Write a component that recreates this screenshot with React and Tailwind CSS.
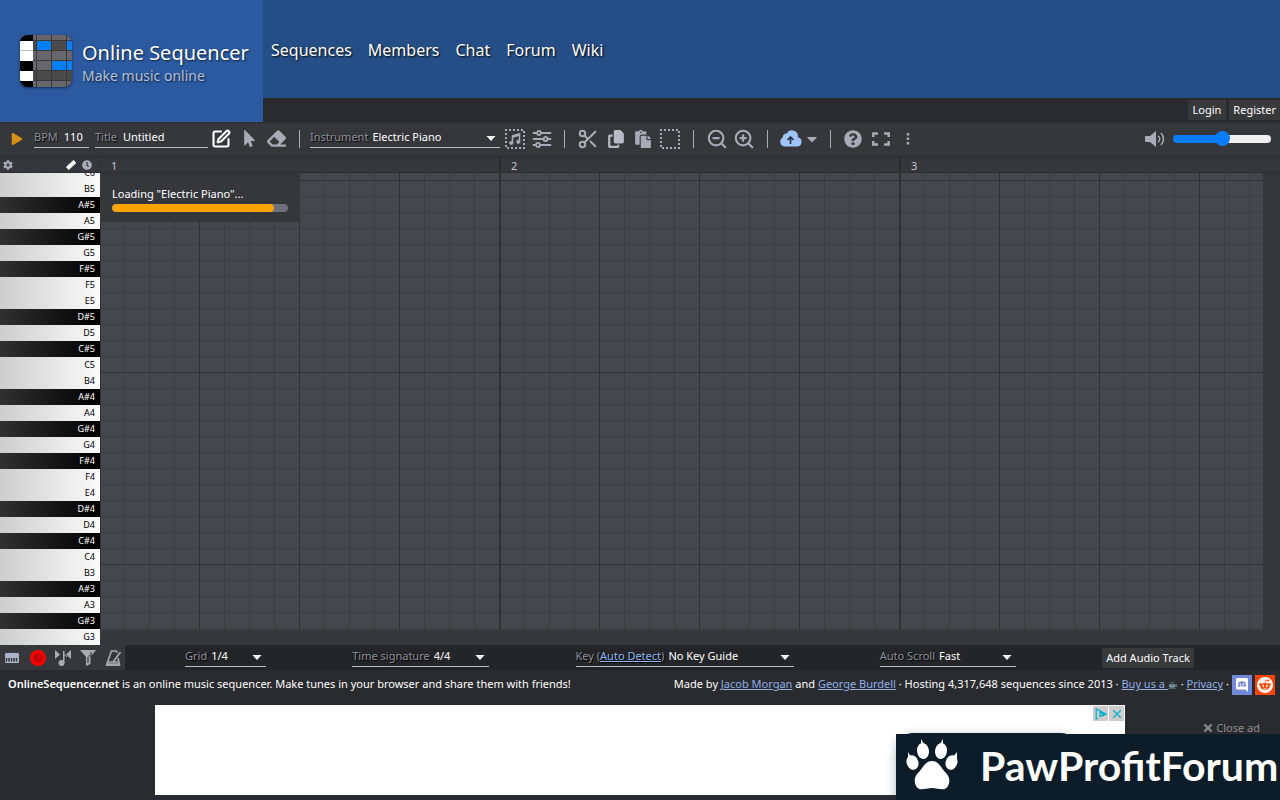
import React from "react";
import { FaPlay, FaMousePointer, FaEraser, FaCog, FaClock, FaQuestionCircle, FaCaretDown, FaPaste } from "react-icons/fa";
import { FaCopy, FaReddit } from "react-icons/fa6";
import { SquarePen, Scissors, ZoomIn, ZoomOut, X } from "lucide-react";

const NOTES = ["C", "B", "A#", "A", "G#", "G", "F#", "F", "E", "D#", "D", "C#"];
const KEYS = [];
for (let i = 0; i < 30; i++) {
  KEYS.push(NOTES[i % 12] + (i === 0 ? 6 : 5 - Math.floor((i - 1) / 12)));
}

const BAR_LABELS = ["1", "2", "3"];

function Logo() {
  return (
    <svg viewBox="0 0 52 52" className="size-[52px] shrink-0 rounded-lg shadow-sm shadow-black/40" aria-hidden="true">
      <rect width="52" height="52" fill="#38383a" />
      <rect width="13" height="52" fill="#000" />
      <rect y="6" width="13" height="20" fill="#fff" />
      <rect y="15" width="13" height="1" fill="#bbb" />
      <rect y="36" width="13" height="10" fill="#fff" />
      {[13, 17, 32, 47].map((x, i) => {
        const w = [3, 14, 14, 5][i];
        return (
          <g key={x}>
            <rect x={x} y="0" width={w} height="5" fill="#67676b" />
            <rect x={x} y="6" width={w} height="9" fill="#4a4a4b" />
            <rect x={x} y="16" width={w} height="9" fill="#67676b" />
            <rect x={x} y="26" width={w} height="9" fill="#67676b" />
            <rect x={x} y="36" width={w} height="9" fill="#4a4a4b" />
            <rect x={x} y="46" width={w} height="6" fill="#67676b" />
          </g>
        );
      })}
      <g fill="#0080ff">
        <rect x="17" y="6" width="14" height="9" rx="1.5" />
        <rect x="47" y="6" width="7" height="9" rx="1" />
        <rect x="32" y="26" width="14" height="9" rx="1" />
        <rect x="47" y="26" width="7" height="9" rx="1" />
      </g>
    </svg>
  );
}

function Separator() {
  return <div className="h-[18px] w-px shrink-0 bg-[#a9abb5]" />;
}

function ToolButton({ label, className = "", children }) {
  return (
    <button type="button" aria-label={label} className={"flex h-6 shrink-0 items-center justify-center text-[#a9abb9] " + className}>
      {children}
    </button>
  );
}

function Caret({ className = "" }) {
  return (
    <svg viewBox="0 0 10 5" className={"w-2.5 " + className} fill="currentColor" aria-hidden="true">
      <path d="M0.500 0h9L5 5z" />
    </svg>
  );
}

function SelectField({ id, label, value, className }) {
  return (
    <div className={"relative flex h-[18px] items-center gap-1 border-b border-[#b9bac6] pb-0.5 text-[11px] " + className}>
      <label htmlFor={id} className="shrink-0 text-[#8d909b] [text-shadow:1px_1px_1px_#000]">
        {label}
      </label>
      <select id={id} defaultValue={value} className="min-w-0 flex-1 appearance-none bg-transparent text-[11px] text-white outline-none">
        <option>{value}</option>
      </select>
      <Caret className="pointer-events-none absolute right-1 top-1.5 text-white" />
    </div>
  );
}

function DottedBox({ children }) {
  return (
    <svg viewBox="0 0 20 20" className="size-5" fill="none" stroke="currentColor">
      <rect x="1" y="1" width="18" height="18" strokeWidth="2" strokeDasharray="2 2" strokeDashoffset="1" />
      {children}
    </svg>
  );
}

function Grid() {
  return (
    <svg className="block h-full w-full" aria-label="Note grid">
      <defs>
        <pattern id="cell" width="25" height="16" y="8" patternUnits="userSpaceOnUse">
          <rect width="25" height="16" fill="#46474c" />
          <rect y="15" width="25" height="1" fill="#3c3d41" />
          <rect x="24" width="1" height="16" fill="#3c3d41" />
        </pattern>
        <pattern id="beat" width="100" height="16" patternUnits="userSpaceOnUse">
          <rect x="99" width="1" height="16" fill="#303135" />
        </pattern>
        <pattern id="bar" width="400" height="192" y="8" patternUnits="userSpaceOnUse">
          <rect x="399" width="2" height="192" fill="#303135" />
          <rect width="1" height="192" fill="#303135" />
          <rect y="191" width="400" height="1" fill="#303135" />
        </pattern>
      </defs>
      <rect width="100%" height="100%" fill="url(#cell)" />
      <rect width="100%" height="100%" fill="url(#beat)" />
      <rect width="100%" height="100%" fill="url(#bar)" />
    </svg>
  );
}

function Header() {
  const link = "text-white [text-shadow:1px_1px_2px_#000]";
  return (
    <header className="flex h-[122px] shrink-0">
      <a href="#home" className="flex w-[263px] shrink-0 items-center gap-2.5 bg-[#2b5aa0] pl-5">
        <Logo />
        <span className="flex flex-col whitespace-nowrap pt-1.5 [text-shadow:1px_1px_2px_#000a]">
          <span className="text-xl leading-6 text-white">Online Sequencer</span>
          <span className="text-sm leading-[22px] text-[#b3c0d6]">Make music online</span>
        </span>
      </a>
      <div className="flex flex-1 flex-col bg-[#2a2b2e]">
        <nav className="flex h-[98px] items-center gap-4 bg-[#254e87] px-2 pt-0.5 text-base">
          <a className={link} href="#sequences">Sequences</a>
          <a className={link} href="#members">Members</a>
          <a className={link} href="#chat">Chat</a>
          <a className={link} href="#forum">Forum</a>
          <a className={link} href="#wiki">Wiki</a>
        </nav>
        <div className="flex h-6 items-center justify-end gap-[3px] text-[11px] text-white">
          <button type="button" className="h-5 bg-[#38393b] px-[5px]">Login</button>
          <button type="button" className="h-5 bg-[#38393b] px-1">Register</button>
        </div>
      </div>
    </header>
  );
}

function Toolbar() {
  return (
    <div className="flex h-[34px] shrink-0 items-center border-t border-[#2d2e31] bg-[#36373a] pb-0.5 pl-[11px] pr-[9px] text-[11px]">
      <ToolButton label="Play" className="w-3">
        <FaPlay className="size-3 text-[#d68f14]" />
      </ToolButton>
      <div className="ml-[11px] flex h-[18px] w-[55px] items-center gap-1.5 border-b border-[#b9bac6] pb-0.5">
        <label htmlFor="bpm" className="text-[#8d909b] [text-shadow:1px_1px_1px_#000]">BPM</label>
        <input id="bpm" defaultValue="110" className="w-0 min-w-0 flex-1 bg-transparent text-white outline-none" />
      </div>
      <div className="ml-1.5 flex h-[18px] w-[113px] items-center gap-1.5 border-b border-[#b9bac6] pb-0.5">
        <label htmlFor="title" className="text-[#8d909b] [text-shadow:1px_1px_1px_#000]">Title</label>
        <input id="title" defaultValue="Untitled" className="w-0 min-w-0 flex-1 bg-transparent text-white outline-none" />
      </div>
      <ToolButton label="Edit" className="ml-[3px] w-5">
        <SquarePen className="size-5 text-white" strokeWidth={2.5} />
      </ToolButton>
      <ToolButton label="Select" className="ml-2 w-5">
        <FaMousePointer className="size-[17px]" />
      </ToolButton>
      <ToolButton label="Erase" className="ml-[7px] mr-[13px] w-5">
        <FaEraser className="size-[19px]" />
      </ToolButton>
      <Separator />
      <SelectField id="instrument" label="Instrument" value="Electric Piano" className="ml-2.5 w-[190px]" />
      <ToolButton label="Select by instrument" className="ml-[5px] w-5">
        <DottedBox>
          <path d="M7.5 13.5V7l7-2v7.5" strokeWidth="1.5" />
          <path d="M7.5 7.5l7-2" strokeWidth="2.5" />
          <circle cx="6.3" cy="14" r="1.6" fill="currentColor" />
          <circle cx="13.3" cy="12.8" r="1.6" fill="currentColor" />
        </DottedBox>
      </ToolButton>
      <ToolButton label="Instrument settings" className="ml-[7px] mr-3 w-5">
        <svg viewBox="0 0 20 20" className="size-5" fill="none" stroke="currentColor" strokeWidth="1.8" strokeLinecap="round">
          <path d="M1.5 4H5m4 0h9.500M1.500 10H11.500m4 0h3M1.500 16H4m4 0h10.500" />
          <circle cx="7" cy="4" r="2" />
          <circle cx="13.500" cy="10" r="2" />
          <circle cx="6" cy="16" r="2" />
        </svg>
      </ToolButton>
      <Separator />
      <ToolButton label="Cut" className="ml-[13px] w-5"><Scissors className="size-[22px] shrink-0" strokeWidth={2.2} /></ToolButton>
      <ToolButton label="Copy" className="ml-2 w-5"><FaCopy className="size-[18px] text-[#b9bac6]" /></ToolButton>
      <ToolButton label="Paste" className="ml-[7px] w-5"><FaPaste className="size-[18px]" /></ToolButton>
      <ToolButton label="Select area" className="ml-[7px] mr-[13px] w-5"><DottedBox /></ToolButton>
      <Separator />
      <ToolButton label="Zoom out" className="ml-[13px] w-5"><ZoomOut className="size-[22px] shrink-0" strokeWidth={2.3} /></ToolButton>
      <ToolButton label="Zoom in" className="ml-[7px] mr-[13px] w-5"><ZoomIn className="size-[22px] shrink-0" strokeWidth={2.3} /></ToolButton>
      <Separator />
      <ToolButton label="Save" className="ml-[11px] w-[23px]">
        <svg viewBox="0 0 23 17" className="w-[23px]">
          <path d="M18.800 7.200A5.800 5.800 0 0 0 7.900 3.600 4 4 0 0 0 3.700 7.400 4.900 4.900 0 0 0 5.300 16.500H18a4.700 4.700 0 0 0 .8-9.300z" fill="#a0c5fa" />
          <path d="M11.500 14V7.500M8.500 10l3-3 3 3" fill="none" stroke="#2b3240" strokeWidth="1.700" />
        </svg>
      </ToolButton>
      <ToolButton label="Save options" className="ml-1 mr-3 w-3"><FaCaretDown className="size-4 shrink-0" /></ToolButton>
      <Separator />
      <ToolButton label="Help" className="ml-3 w-5"><FaQuestionCircle className="size-[18px]" /></ToolButton>
      <ToolButton label="Fullscreen" className="ml-2 w-5">
        <svg viewBox="0 0 20 16" className="w-5" fill="none" stroke="currentColor" strokeWidth="2.500">
          <path d="M2.300 6V2.500H7M13 2.500h4.700V6M17.700 10v3.500H13M7 13.500H2.300V10" />
        </svg>
      </ToolButton>
      <ToolButton label="More" className="ml-[7px] w-5">
        <svg viewBox="0 0 4 12" className="h-3" fill="currentColor">
          <rect x=".7" y="0" width="2.500" height="2.500" /><rect x=".7" y="4.500" width="2.500" height="2.500" /><rect x=".7" y="9" width="2.500" height="2.500" />
        </svg>
      </ToolButton>
      <div className="ml-auto flex items-center gap-2">
        <ToolButton label="Mute" className="w-5">
          <svg viewBox="0 0 20 16" className="w-5" fill="none" stroke="currentColor" strokeWidth="1.500">
            <path d="M1 5h4l6-5v16L5 11H1a1 1 0 0 1-1-1V6a1 1 0 0 1 1-1z" fill="currentColor" stroke="none" />
            <path d="M13.500 5.200a4 4 0 0 1 0 5.600M16.300 2.500a8 8 0 0 1 0 11" strokeLinecap="round" />
          </svg>
        </ToolButton>
        <input
          type="range"
          aria-label="Volume"
          defaultValue="50"
          className="h-2 w-[98px] appearance-none rounded-full bg-[linear-gradient(90deg,#0a7cff_50%,#efefef_50%)] [&::-webkit-slider-thumb]:size-[15px] [&::-webkit-slider-thumb]:appearance-none [&::-webkit-slider-thumb]:rounded-full [&::-webkit-slider-thumb]:bg-[#0a7cff]"
        />
      </div>
    </div>
  );
}

function Ruler() {
  return (
    <div className="flex h-[17px] shrink-0 border-y border-[#2d2e31] bg-[#36373a] text-[#a9abb9]">
      <div className="flex w-[101px] shrink-0 items-center border-r border-[#2d2e31] pl-[3px] pr-2">
        <button type="button" aria-label="Settings"><FaCog className="size-2.5" /></button>
        <button type="button" aria-label="Ruler" className="ml-auto mr-[5px]">
          <svg viewBox="0 0 12 12" className="size-3"><path d="M8.500 1.500 1.500 8l2.200 2.500 7-6.500z" fill="#fff" stroke="#fff" strokeLinejoin="round" /></svg>
        </button>
        <button type="button" aria-label="Time"><FaClock className="size-2.5" /></button>
      </div>
      <div className="flex flex-1 overflow-hidden text-[11px] leading-[17px] text-[#c5c6cc]">
        {BAR_LABELS.map((n) => (
          <div key={n} className="w-[400px] shrink-0 border-r-2 border-[#2a2b2e] pl-2.5">{n}</div>
        ))}
      </div>
    </div>
  );
}

function Piano() {
  return (
    <div className="w-[100px] shrink-0 overflow-hidden">
      <div className="-mt-2 text-[9px] leading-4">
        {KEYS.map((k) => (
          <div
            key={k}
            className={
              k.includes("#")
                ? "h-4 bg-[linear-gradient(90deg,#303030,#000)] pr-[5px] text-right text-white"
                : "h-4 bg-[linear-gradient(90deg,#cecece,#fafafa)] pr-[5px] text-right text-black"
            }
          >
            {k}
          </div>
        ))}
      </div>
    </div>
  );
}

function Editor() {
  return (
    <main className="flex min-h-0 flex-1 bg-[#36373a]">
      <Piano />
      <div className="relative flex-1 pb-[15px] pr-[17px]">
        <Grid />
        <div className="absolute left-0 top-0 w-[200px] bg-[#36373a] px-3 pb-2.5 pt-[13px] text-[11px] leading-4 text-white">
          <div>Loading "Electric Piano"...</div>
          <div className="mt-0.5 h-2 overflow-hidden rounded-sm bg-[#6c707c]">
            <div className="h-full w-[92%] rounded-sm bg-[#ffa500]" />
          </div>
        </div>
      </div>
    </main>
  );
}

function BottomBar() {
  return (
    <div className="flex h-[25px] shrink-0 bg-[#242528] text-[11px]">
      <div className="flex w-[125px] shrink-0 items-center gap-[5px] bg-[#36373a] pl-1 text-[#a9abb0]">
        <button type="button" aria-label="Keyboard" className="flex w-4 justify-center">
          <svg viewBox="0 0 14 10" className="w-3.5"><rect width="14" height="10" rx="1" fill="#a9b4c8" /><path d="M1.500 8.500V5M4 8.500V5M6.500 8.500V5M9 8.500V5M11.500 8.500V5" stroke="#303135" strokeWidth="1.500" /></svg>
        </button>
        <button type="button" aria-label="Record" className="ml-1 flex w-[18px] justify-center">
          <svg viewBox="0 0 16 16" className="size-4"><circle cx="8" cy="8" r="8" fill="#f00" /><circle cx="8" cy="8" r="5" fill="#c80000" /></svg>
        </button>
        <button type="button" aria-label="Note preview" className="ml-0.5 flex w-[18px] justify-center">
          <svg viewBox="0 0 16 16" className="size-4 shrink-0" fill="currentColor"><path d="M0 0l5 4.500L0 9zM16 0l-5 4.500L16 9zM8 1h1.500v12H8z" /><path d="M9 4l3 3" stroke="currentColor" /><circle cx="6.500" cy="13" r="3" /></svg>
        </button>
        <button type="button" aria-label="Filter" className="ml-0.5 flex w-[18px] justify-center">
          <svg viewBox="0 0 16 16" className="size-4 shrink-0" fill="currentColor"><path d="M0 0h16l-5.500 7v7L6 16V7z" /><path d="M8 13V7M11 2v4H8.500" stroke="#36373a" fill="none" strokeWidth="1.200" /></svg>
        </button>
        <button type="button" aria-label="Metronome" className="ml-0.5 flex w-[18px] justify-center">
          <svg viewBox="0 0 16 16" className="size-4 shrink-0" fill="none" stroke="currentColor" strokeWidth="1.600"><path d="M12 3L11.500 1h-5L1.500 15h13L13 8M8 12l7.500-10M3 12h10" /><path d="M2 14.500h12.500" strokeWidth="2.500" /></svg>
        </button>
      </div>
      <div className="flex flex-1 items-center justify-between pl-[60px] pr-[86px] pt-px">
        <SelectField id="grid" label="Grid" value="1/4" className="w-[81px]" />
        <SelectField id="signature" label="Time signature" value="4/4" className="w-[137px]" />
        <SelectField
          id="key"
          label={<>Key (<a href="#auto" className="text-[#8fb8f5] underline">Auto Detect</a>)</>}
          value="No Key Guide"
          className="w-[218px]"
        />
        <SelectField id="scroll" label="Auto Scroll" value="Fast" className="w-[136px]" />
        <button type="button" className="h-5 w-[92px] whitespace-nowrap bg-[#38393b] text-white">Add Audio Track</button>
      </div>
    </div>
  );
}

function Footer() {
  const link = "text-[#8fb0ea] underline";
  return (
    <footer className="shrink-0 bg-[#2a2b2e] text-[11px] text-white">
      <div className="flex h-[29px] items-center justify-between whitespace-nowrap pl-2 pr-[5px]">
        <p><b className="font-semibold">OnlineSequencer.net</b> is an online music sequencer. Make tunes in your browser and share them with friends!</p>
        <div className="flex items-center gap-[3px]">
          <p>
            Made by <a className={link} href="#jacob">Jacob Morgan</a> and <a className={link} href="#george">George Burdell</a> · Hosting 4,317,648 sequences since 2013 · <a className={link} href="#coffee">Buy us a <svg viewBox="0 0 12 10" className="inline w-2.5" aria-hidden="true"><path d="M1 4h8v1c0 2-1 3-2 3H3C2 8 1 7 1 5zM0 9h10v1H0z" fill="#6f8f9c" /><path d="M9 4.500h1.500v2H8.500M4 3V1M6 3V1" stroke="#6f8f9c" fill="none" /></svg></a> · <a className={link} href="#privacy">Privacy</a> ·
          </p>
          <a href="#discord" aria-label="Discord" className="flex size-5 items-center justify-center bg-[#7289da]">
            <svg viewBox="0 0 14 15" className="w-3.5"><path d="M2.500 1h9A1.500 1.500 0 0 1 13 2.500V15l-2.500-2.500h-8A1.500 1.500 0 0 1 1 11V2.500A1.500 1.500 0 0 1 2.500 1z" fill="#fff" /><path d="M3 9.500C3 7 3.500 5.500 4 5c2-1 4-1 6 0 .5.500 1 2 1 4.500l-1.500.5-.7-.8H5.200l-.7.8z" fill="#7289da" /><circle cx="5.500" cy="7.500" r=".9" fill="#fff" /><circle cx="8.500" cy="7.500" r=".9" fill="#fff" /></svg>
          </a>
          <a href="#reddit" aria-label="Reddit" className="flex size-5 items-center justify-center bg-[#ff4500]">
            <svg viewBox="0 0 16 16" className="size-4">
              <circle cx="8" cy="8" r="8" fill="#fff" />
              <g fill="#ff4500">
                <ellipse cx="8" cy="9.300" rx="4.600" ry="3.400" />
                <circle cx="3.400" cy="7.500" r="1.300" />
                <circle cx="12.600" cy="7.500" r="1.300" />
                <circle cx="11.200" cy="3.500" r="1" />
                <path d="M8 6.500 8.600 3l2.500.6" fill="none" stroke="#ff4500" strokeWidth=".7" />
              </g>
              <circle cx="6.200" cy="8.700" r="1" fill="#fff" />
              <circle cx="9.800" cy="8.700" r="1" fill="#fff" />
              <path d="M6 10.800c1.200.9 2.800.9 4 0" fill="none" stroke="#fff" strokeWidth=".7" />
            </svg>
          </a>
        </div>
      </div>
      <div className="relative flex justify-center pb-[5px] pt-1.5">
        <div className="relative h-[90px] w-[970px] overflow-hidden bg-white">
          <div className="absolute left-[742px] top-7 h-20 w-[180px] rounded-2xl bg-[#0c1d29] shadow-[0_4px_12px_#0c1d2966]" />
          <div className="absolute right-px top-px flex gap-px">
            <button type="button" aria-label="Ad choices" className="flex size-[15px] items-center justify-center bg-[#ccc]">
              <svg viewBox="0 0 12 12" className="size-3" fill="none" stroke="#00aecd" strokeWidth="1.200"><path d="M3 10.500 1.200 11V1L11 6 7 8.200M5 4v4.500l3.500-2.300z" /></svg>
            </button>
            <button type="button" aria-label="Close" className="flex size-[15px] items-center justify-center bg-[#ccc] text-[#00aecd]">
              <X className="size-3.5" strokeWidth={2} />
            </button>
          </div>
        </div>
        <button type="button" className="absolute right-5 top-5 flex items-center gap-0.5 pt-px text-[#8d8e92]">
          <X className="size-3" strokeWidth={4} />Close ad
        </button>
      </div>
    </footer>
  );
}

function Watermark() {
  return (
    <div className="absolute bottom-0 right-0 flex h-[66px] w-96 items-center bg-[#0c1d29] pl-2.5 text-white">
      <svg viewBox="0 0 52 52" className="size-[52px] shrink-0 -translate-y-0.5" fill="#fff" aria-hidden="true">
        <path d="M26 22C19 22 17 29 12 34 8 38 8 43 10 47c3 6 10 2 16 2s13 4 16-2c2-4 2-9-2-13-5-5-7-12-14-12z" />
        <ellipse cx="17" cy="12" rx="6" ry="8" transform="rotate(-8 17 12)" />
        <ellipse cx="35" cy="12" rx="6" ry="8" transform="rotate(8 35 12)" />
        <ellipse cx="6.500" cy="23.500" rx="5.800" ry="7.500" transform="rotate(-20 6.500 23.500)" />
        <ellipse cx="45.500" cy="23.500" rx="5.800" ry="7.500" transform="rotate(20 45.500 23.500)" />
        <path d="M15 6V0l3 5zM34 5l3-5v6zM2 19V13l3 5zM47 18l4-5v6z" />
      </svg>
      <span className="ml-[22px] whitespace-nowrap pb-1 font-['Lato'] text-[41px] font-bold leading-none">PawProfitForum</span>
    </div>
  );
}

export default function App() {
  return (
    <div className="relative flex h-screen flex-col overflow-hidden bg-[#2a2b2e] font-['Noto_Sans','Open_Sans',sans-serif]">
      <Header />
      <Toolbar />
      <Ruler />
      <Editor />
      <BottomBar />
      <Footer />
      <Watermark />
    </div>
  );
}
